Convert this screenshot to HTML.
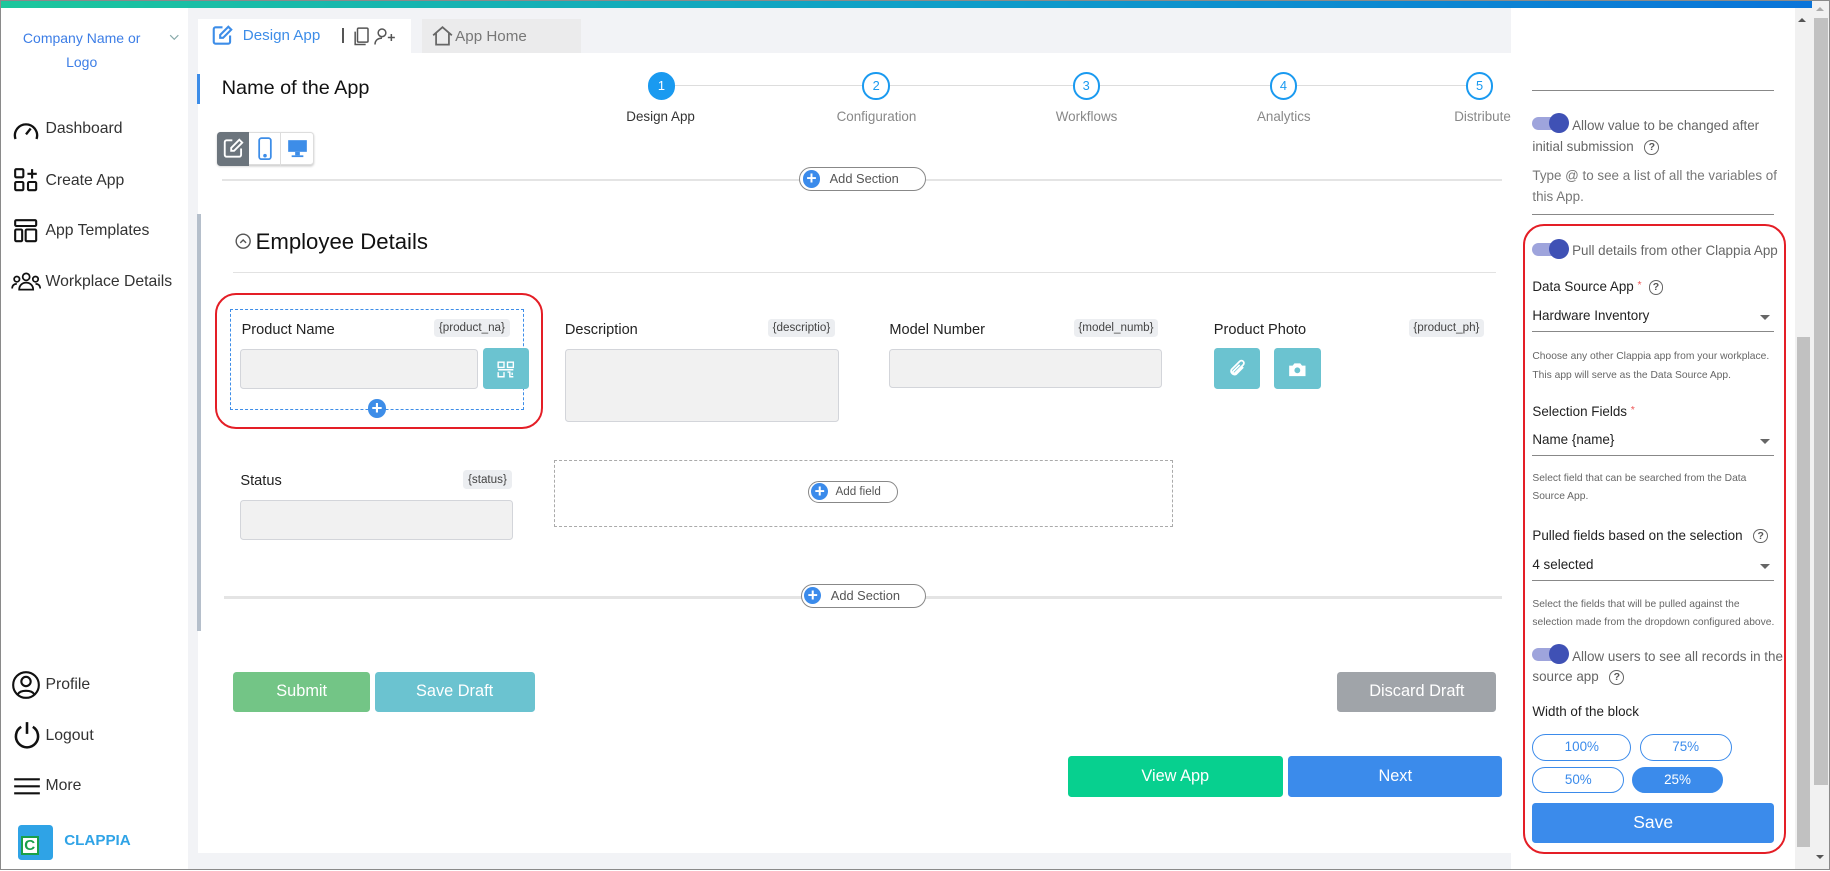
<!DOCTYPE html>
<html><head><meta charset="utf-8"><style>
html,body{margin:0;padding:0;width:1830px;height:871px;overflow:hidden;background:#fff}
#w{position:absolute;left:0;top:0;width:1568px;height:746px;zoom:1.16709;font-family:"Liberation Sans",Arial,sans-serif;overflow:hidden}
.a{position:absolute}
.t{position:absolute;white-space:nowrap}
.nav{font-size:13.5px;color:#333}
.lbl{font-size:12.5px;color:#222}
.tag{position:absolute;background:#eceef1;border-radius:3px;font-size:10px;color:#444;padding:2px 4px;line-height:12px}
.inp{position:absolute;background:#f1f1f1;border:1px solid #d3d5da;border-radius:3px}
.btn{position:absolute;color:#fff;font-size:14px;text-align:center;border-radius:3px}
.pill{position:absolute;border:1px solid #888;border-radius:12px;background:#fff;font-size:11px;color:#555;height:19px;line-height:19px}
.pill i{position:absolute;left:2px;top:2px;width:15px;height:15px;border-radius:50%;background:#3b8beb;color:#fff;font-style:normal;font-weight:bold;text-align:center;line-height:15px;font-size:15px}
.rp{font-size:11.5px;color:#666}
.help{font-size:8.8px;color:#666}
.q{display:inline-block;width:11px;height:11px;border:1.3px solid #666;border-radius:50%;font-size:9px;line-height:11px;text-align:center;color:#555;font-weight:bold;vertical-align:middle;margin-left:6px}
.tg{position:absolute;width:30px;height:18px}
.tg b{position:absolute;left:0;top:4px;width:28px;height:11px;border-radius:6px;background:#9ea4dc}
.tg s{position:absolute;left:14px;top:1px;width:17px;height:17px;border-radius:50%;background:#3f51b5}
.sel{position:absolute;left:1313px;width:207px;border-bottom:1px solid #888;font-size:11.5px;color:#222;height:20px}
.sel:after{content:"";position:absolute;right:3px;top:6px;border-left:5px solid transparent;border-right:5px solid transparent;border-top:5px solid #666}
.wp{position:absolute;border:1px solid #3b8beb;border-radius:12px;height:21px;line-height:21px;text-align:center;font-size:11.5px;color:#3b8beb}
.step{position:absolute;width:20px;height:20px;border:2px solid #1a9af0;border-radius:50%;color:#1a9af0;font-size:11px;text-align:center;line-height:20px;background:#fff}
.sl{position:absolute;font-size:11.5px;color:#888;text-align:center;width:120px}
</style></head><body><div id="w">
<div class="a" style="left:0;top:0;width:1553px;height:7px;background:linear-gradient(90deg,#1cc79c,#0f9fc8 50%,#0a74d9)"></div>
<div class="a" style="left:0;top:0;width:1566px;height:744px;border:1px solid #8a8a8a"></div>
<div class="a" style="left:1px;top:7px;width:160px;height:738px;background:#fff"></div>
<div class="t" style="left:14px;top:22px;font-size:12px;color:#3d7ee6;text-align:center;width:112px;white-space:normal;line-height:21px">Company Name or Logo</div>
<svg class="a" style="left:145px;top:29px" width="9" height="6"><path d="M1 1l3.5 3.5L8 1" stroke="#8aa" fill="none"/></svg>
<svg class="a" style="left:10px;top:101px" width="24" height="20" fill="none" stroke="#111" stroke-width="2"><path d="M3 18A9.5 9.5 0 1 1 21 18"/><path d="M12 14l4-5"/></svg>
<div class="t nav" style="left:39px;top:103px">Dashboard</div>
<svg class="a" style="left:12px;top:144px" width="22" height="22" fill="none" stroke="#111" stroke-width="1.8"><rect x="1" y="1" width="7" height="7" rx="1"/><rect x="1" y="12" width="7" height="7" rx="1"/><rect x="12" y="12" width="7" height="7" rx="1"/><path d="M15.5 1v8M11.5 5h8"/></svg>
<div class="t nav" style="left:39px;top:147px">Create App</div>
<svg class="a" style="left:12px;top:188px" width="22" height="22" fill="none" stroke="#111" stroke-width="1.8"><rect x="1" y="1" width="18" height="5" rx="1"/><rect x="1" y="9" width="6" height="10" rx="1"/><rect x="10" y="9" width="9" height="10" rx="1"/></svg>
<div class="t nav" style="left:39px;top:190px">App Templates</div>
<svg class="a" style="left:9px;top:232px" width="26" height="18" fill="none" stroke="#111" stroke-width="1.5"><circle cx="13" cy="5" r="3"/><circle cx="5" cy="7" r="2.3"/><circle cx="21" cy="7" r="2.3"/><path d="M7 16c0-4 3-6 6-6s6 2 6 6zM1 15c0-3 2-4 4-4M25 15c0-3-2-4-4-4"/></svg>
<div class="t nav" style="left:39px;top:234px">Workplace Details</div>
<svg class="a" style="left:10px;top:575px" width="24" height="24" fill="none" stroke="#111" stroke-width="1.8"><circle cx="12" cy="12" r="11"/><circle cx="12" cy="9" r="4"/><path d="M5 20c2-4 12-4 14 0"/></svg>
<div class="t nav" style="left:39px;top:579px">Profile</div>
<svg class="a" style="left:11px;top:618px" width="24" height="24" fill="none" stroke="#111" stroke-width="2.2"><path d="M7 5A9.5 9.5 0 1 0 17 5M12 1v10"/></svg>
<div class="t nav" style="left:39px;top:623px">Logout</div>
<svg class="a" style="left:11px;top:666px" width="24" height="16" stroke="#111" stroke-width="1.8"><path d="M1 2h22M1 8h22M1 14h22"/></svg>
<div class="t nav" style="left:39px;top:666px">More</div>
<div class="a" style="left:15px;top:707px;width:30px;height:30px;background:#2fa3e6;border-radius:3px"></div>
<div class="a" style="left:18px;top:716px;width:15px;height:17px;background:#fff;border:2px solid #1aa04a;box-sizing:border-box;color:#1aa04a;font-weight:bold;font-size:13px;line-height:13px;text-align:center">C</div>
<div class="t" style="left:55px;top:713px;font-size:13px;font-weight:bold;color:#2fa3e6">CLAPPIA</div>
<div class="a" style="left:161px;top:7px;width:1134px;height:738px;background:#f2f3f6"></div>
<div class="a" style="left:170px;top:16px;width:182px;height:30px;background:#fff"></div>
<svg class="a" style="left:182px;top:21px" width="18" height="18" fill="none" stroke="#3d8de8" stroke-width="1.8"><path d="M9 2H3a1.5 1.5 0 0 0-1.5 1.5v11A1.5 1.5 0 0 0 3 16h11a1.5 1.5 0 0 0 1.5-1.5V9"/><path d="M14 1.5l2.5 2.5-7 7H7V8.5z"/></svg>
<div class="t" style="left:208px;top:23px;font-size:13px;color:#3d8de8">Design App</div>
<div class="a" style="left:293px;top:24px;width:2px;height:13px;background:#555"></div>
<svg class="a" style="left:303px;top:23px" width="38" height="16" fill="none" stroke="#555" stroke-width="1.3"><rect x="3" y="1" width="9" height="12" rx="1"/><path d="M1 4v11h9"/><circle cx="24" cy="5" r="3.3"/><path d="M18 15c0-4 3-5.5 6-5.5M32 6v6M29 9h6"/></svg>
<div class="a" style="left:362px;top:16px;width:136px;height:30px;background:#ebebec"></div>
<svg class="a" style="left:370px;top:22px" width="18" height="17" fill="none" stroke="#666" stroke-width="1.5"><path d="M1 8L9 1l8 7M3.5 6v10h11V6"/></svg>
<div class="t" style="left:390px;top:24px;font-size:13px;color:#777">App Home</div>
<div class="a" style="left:170px;top:45px;width:1125px;height:686px;background:#fff"></div>
<div class="a" style="left:169px;top:63px;width:2px;height:26px;background:#3d8de8"></div>
<div class="a" style="left:169px;top:183px;width:3px;height:358px;background:#b5bfcb"></div>
<div class="t" style="left:190px;top:66px;font-size:17px;color:#111">Name of the App</div>
<div class="a" style="left:578px;top:73px;width:690px;height:1px;background:#ddd"></div>
<div class="step" style="left:555px;top:62px;background:#1a9af0;color:#fff">1</div>
<div class="step" style="left:739px;top:62px">2</div>
<div class="step" style="left:919px;top:62px">3</div>
<div class="step" style="left:1088px;top:62px">4</div>
<div class="step" style="left:1256px;top:62px">5</div>
<div class="sl" style="left:506px;top:93px;color:#333">Design App</div>
<div class="sl" style="left:691px;top:93px">Configuration</div>
<div class="sl" style="left:871px;top:93px">Workflows</div>
<div class="sl" style="left:1040px;top:93px">Analytics</div>
<div class="t" style="left:1246px;top:93px;font-size:11.5px;color:#888">Distribute</div>
<div class="a" style="left:186px;top:113px;width:81px;height:27px;border:1px solid #ddd;border-radius:3px;background:#fff;box-shadow:0 1px 2px #ccc"></div>
<div class="a" style="left:186px;top:113px;width:27px;height:29px;background:#6c757d;border-radius:3px 0 0 3px"></div>
<svg class="a" style="left:191px;top:118px" width="18" height="18" fill="none" stroke="#fff" stroke-width="1.6"><path d="M8 2H3a1.5 1.5 0 0 0-1.5 1.5v11A1.5 1.5 0 0 0 3 16h11a1.5 1.5 0 0 0 1.5-1.5V9"/><path d="M14 1.5l2.5 2.5-7 7H7V8.5z"/></svg>
<div class="a" style="left:240px;top:113px;width:1px;height:29px;background:#ddd"></div>
<svg class="a" style="left:221px;top:117px" width="12" height="21" fill="none" stroke="#3d8de8" stroke-width="1.5"><rect x="1" y="1" width="10" height="18" rx="2"/><circle cx="6" cy="16" r=".8" fill="#3d8de8"/></svg>
<svg class="a" style="left:246px;top:119px" width="18" height="16"><rect x="1" y="1" width="16" height="10" fill="#3d8de8"/><rect x="7" y="11" width="4" height="3" fill="#3d8de8"/><rect x="4" y="14" width="10" height="1.5" fill="#3d8de8"/></svg>
<div class="a" style="left:190px;top:153px;width:1097px;height:2px;background:#e4e4e4"></div>
<div class="pill" style="left:685px;top:143px;width:107px"><i>+</i><span style="margin-left:25px">Add Section</span></div>
<svg class="a" style="left:201px;top:200px" width="14" height="14" fill="none" stroke="#555" stroke-width="1.2"><circle cx="7" cy="7" r="6"/><path d="M4.5 8.5L7 6l2.5 2.5"/></svg>
<div class="t" style="left:219px;top:196px;font-size:19px;color:#111">Employee Details</div>
<div class="a" style="left:200px;top:233px;width:1082px;height:1px;background:#e2e2e2"></div>
<div class="a" style="left:184px;top:251px;width:278px;height:113px;border:2px solid #e41e26;border-radius:18px"></div>
<div class="a" style="left:197px;top:265px;width:250px;height:85px;border:1px dashed #3d8de8"></div>
<div class="t lbl" style="left:207px;top:276px">Product Name</div>
<div class="tag" style="left:372px;top:273px">{product_na}</div>
<div class="inp" style="left:206px;top:299px;width:202px;height:33px"></div>
<div class="a" style="left:414px;top:298px;width:39px;height:35px;background:#6bc3d0;border-radius:3px"></div>
<svg class="a" style="left:426px;top:309px" width="15" height="15" fill="none" stroke="#fff" stroke-width="1.2"><rect x="1" y="1" width="5" height="4.5"/><rect x="9" y="1" width="5" height="4.5"/><path d="M1 7.5h13M1 9.5v4h5v-4M9 9.5h2v4h3M13 10v2"/></svg>
<div class="a" style="left:315px;top:342px;width:16px;height:16px;border-radius:50%;background:#3d8de8;color:#fff;text-align:center;line-height:16px;font-weight:bold;font-size:16px">+</div>
<div class="t lbl" style="left:484px;top:276px">Description</div>
<div class="tag" style="left:658px;top:273px">{descriptio}</div>
<div class="inp" style="left:484px;top:299px;width:233px;height:61px"></div>
<div class="t lbl" style="left:762px;top:276px">Model Number</div>
<div class="tag" style="left:920px;top:273px">{model_numb}</div>
<div class="inp" style="left:762px;top:299px;width:232px;height:32px"></div>
<div class="t lbl" style="left:1040px;top:276px">Product Photo</div>
<div class="tag" style="left:1207px;top:273px">{product_ph}</div>
<div class="a" style="left:1040px;top:298px;width:40px;height:35px;background:#6bc3d0;border-radius:3px"></div>
<svg class="a" style="left:1052px;top:308px" width="16" height="16" fill="none" stroke="#fff" stroke-width="1.5"><path d="M13 7l-6 6a3 3 0 0 1-4-4l7-7a2 2 0 0 1 3 3l-7 7a1 1 0 0 1-1.5-1.5L10 5"/></svg>
<div class="a" style="left:1092px;top:298px;width:40px;height:35px;background:#6bc3d0;border-radius:3px"></div>
<svg class="a" style="left:1104px;top:309px" width="16" height="14"><path d="M1 4h3l1.5-2h5L12 4h3v9H1z" fill="#fff"/><circle cx="8" cy="8" r="2.5" fill="#6bc3d0"/></svg>
<div class="t lbl" style="left:206px;top:405px">Status</div>
<div class="tag" style="left:397px;top:403px">{status}</div>
<div class="inp" style="left:206px;top:428px;width:232px;height:33px"></div>
<div class="a" style="left:475px;top:394px;width:528px;height:56px;border:1px dashed #aaa"></div>
<div class="pill" style="left:692px;top:412px;width:76px;height:17px;line-height:17px;font-size:10px"><i style="top:1px">+</i><span style="margin-left:23px">Add field</span></div>
<div class="a" style="left:192px;top:511px;width:1095px;height:2px;background:#e4e4e4"></div>
<div class="pill" style="left:686px;top:500px;width:106px"><i>+</i><span style="margin-left:25px">Add Section</span></div>
<div class="btn" style="left:200px;top:576px;width:117px;height:34px;line-height:34px;background:#73c586">Submit</div>
<div class="btn" style="left:321px;top:576px;width:137px;height:34px;line-height:34px;background:#6bc3d0">Save Draft</div>
<div class="btn" style="left:1146px;top:576px;width:136px;height:34px;line-height:34px;background:#a0a4a9">Discard Draft</div>
<div class="btn" style="left:915px;top:648px;width:184px;height:35px;line-height:35px;background:#07d08f">View App</div>
<div class="btn" style="left:1104px;top:648px;width:183px;height:35px;line-height:35px;background:#3b8beb">Next</div>
<div class="a" style="left:1295px;top:7px;width:243px;height:738px;background:#fff"></div>
<div class="a" style="left:1313px;top:77px;width:207px;height:1px;background:#888"></div>
<div class="tg" style="left:1313px;top:96px"><b></b><s></s></div>
<div class="t rp" style="left:1347px;top:101px">Allow value to be changed after</div>
<div class="t rp" style="left:1313px;top:119px">initial submission <span class="q">?</span></div>
<div class="t rp" style="left:1313px;top:144px;color:#777">Type @ to see a list of all the variables of</div>
<div class="t rp" style="left:1313px;top:162px;color:#777">this App.</div>
<div class="a" style="left:1313px;top:183px;width:207px;height:1px;background:#888"></div>
<div class="a" style="left:1305px;top:192px;width:222px;height:536px;border:2px solid #e41e26;border-radius:18px"></div>
<div class="tg" style="left:1313px;top:204px"><b></b><s></s></div>
<div class="t rp" style="left:1347px;top:208px">Pull details from other Clappia App</div>
<div class="t" style="left:1313px;top:239px;font-size:11.5px;color:#222">Data Source App <span style="color:#e55;font-size:9px;vertical-align:top">*</span><span class="q">?</span></div>
<div class="sel" style="top:264px">Hardware Inventory</div>
<div class="t help" style="left:1313px;top:301px">Choose any other Clappia app from your workplace.</div>
<div class="t help" style="left:1313px;top:317px">This app will serve as the Data Source App.</div>
<div class="t" style="left:1313px;top:346px;font-size:11.5px;color:#222">Selection Fields <span style="color:#e55;font-size:9px;vertical-align:top">*</span></div>
<div class="sel" style="top:370px">Name {name}</div>
<div class="t help" style="left:1313px;top:405px">Select field that can be searched from the Data</div>
<div class="t help" style="left:1313px;top:421px">Source App.</div>
<div class="t" style="left:1313px;top:452px;font-size:11.5px;color:#222">Pulled fields based on the selection <span class="q">?</span></div>
<div class="sel" style="top:477px">4 selected</div>
<div class="t help" style="left:1313px;top:513px">Select the fields that will be pulled against the</div>
<div class="t help" style="left:1313px;top:529px">selection made from the dropdown configured above.</div>
<div class="tg" style="left:1313px;top:551px"><b></b><s></s></div>
<div class="t rp" style="left:1347px;top:556px">Allow users to see all records in the</div>
<div class="t rp" style="left:1313px;top:573px">source app <span class="q">?</span></div>
<div class="t" style="left:1313px;top:603px;font-size:11.5px;color:#222">Width of the block</div>
<div class="wp" style="left:1313px;top:629px;width:83px">100%</div>
<div class="wp" style="left:1405px;top:629px;width:77px">75%</div>
<div class="wp" style="left:1313px;top:657px;width:77px">50%</div>
<div class="wp" style="left:1398px;top:657px;width:77px;background:#3b8beb;color:#fff">25%</div>
<div class="btn" style="left:1313px;top:688px;width:207px;height:34px;line-height:34px;background:#3b8beb;font-size:15px">Save</div>
<div class="a" style="left:1538px;top:7px;width:15px;height:738px;background:#f1f1f1"></div>
<div class="a" style="left:1540px;top:289px;width:11px;height:437px;background:#c1c1c1"></div>
<div class="a" style="left:1553px;top:1px;width:14px;height:744px;background:#f1f1f1"></div>
<div class="a" style="left:1554px;top:15px;width:12px;height:658px;background:#c1c1c1"></div>
<div class="a" style="left:1541px;top:15px;border-left:4px solid transparent;border-right:4px solid transparent;border-bottom:4px solid #555"></div>
<div class="a" style="left:1556px;top:6px;border-left:4px solid transparent;border-right:4px solid transparent;border-bottom:4px solid #aaa"></div>
<div class="a" style="left:1556px;top:733px;border-left:4px solid transparent;border-right:4px solid transparent;border-top:4px solid #555"></div>
</div></body></html>
